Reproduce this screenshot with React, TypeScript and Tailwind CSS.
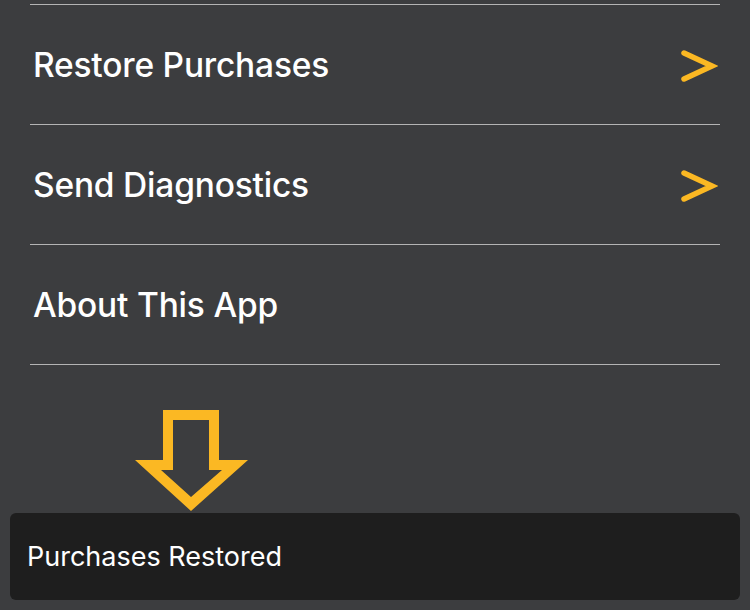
import React from "react";

function Chevron() {
  return (
    <svg width="40" height="40" viewBox="0 0 40 40" className="shrink-0">
      <polyline
        points="6,8 34,21 6,34"
        fill="none"
        stroke="#fbb823"
        strokeWidth="5.5"
        strokeLinecap="round"
        strokeLinejoin="miter"
      />
    </svg>
  );
}

function Row({ label, chevron }: { label: string; chevron?: boolean }) {
  return (
    <div className="h-[120px] border-b border-[#b4b4b4] flex items-center justify-between pl-[3px] pr-[2px]">
      <span className="text-white text-[33.5px] font-medium tracking-[-0.2px] pt-[2px]">{label}</span>
      {chevron && <Chevron />}
    </div>
  );
}

export default function App() {
  return (
    <div
      className="relative w-[750px] h-[610px] overflow-hidden bg-[#3c3d3f]"
      style={{ fontFamily: "Inter, 'Noto Sans', sans-serif" }}
    >
      <div className="pt-[4px] px-[30px]">
        <div className="border-t border-[#b4b4b4]">
          <Row label="Restore Purchases" chevron />
          <Row label="Send Diagnostics" chevron />
          <Row label="About This App" />
        </div>
      </div>
      <div className="pl-[130px] pt-[40px]">
        <svg width="124" height="110" viewBox="130 405 124 110">
          <path
            fillRule="evenodd"
            fill="#fbb823"
            d="M163 410 L219 410 L219 460 L248 460 L191 511 L135 460 L163 460 Z M173 420 L173 470 L161 470 L191 497 L222 470 L209 470 L209 420 Z"
          />
        </svg>
      </div>
      <div className="absolute left-[10px] right-[10px] top-[513px] h-[87px] rounded-[6px] bg-[#1e1e1e] flex items-center pl-[17px]">
        <span className="text-white text-[27px] font-normal pt-[2px]">Purchases Restored</span>
      </div>
    </div>
  );
}
